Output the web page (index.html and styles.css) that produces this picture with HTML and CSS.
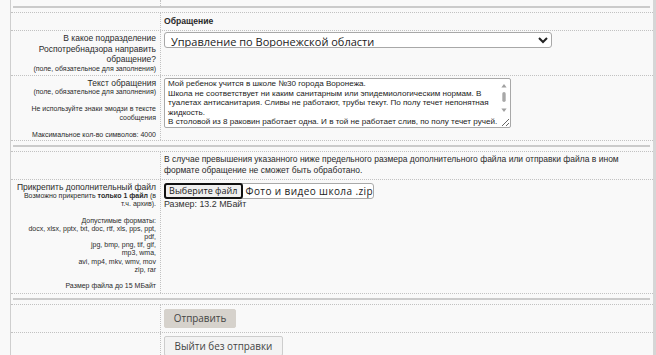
FILE: index.html
```html
<!DOCTYPE html>
<html lang="ru">
<head>
<meta charset="utf-8">
<title>Обращение</title>
<link rel="stylesheet" href="styles.css">
</head>
<body>
<div class="page">
  <div class="row row-top"><div class="lbl"></div><div class="val"></div></div>
  <div class="sep sep-first"><div class="sep-line"></div></div>

  <div class="row row-head">
    <div class="lbl"></div>
    <div class="val"><b class="head">Обращение</b></div>
  </div>

  <div class="row row-select">
    <div class="lbl">
      <div class="lbl-main">В какое подразделение<br>Роспотребнадзора направить<br>обращение?</div>
      <div class="lbl-small">(поле, обязательное для заполнения)</div>
    </div>
    <div class="val">
      <select class="sel"><option>Управление по Воронежской области</option></select>
    </div>
  </div>

  <div class="row row-text">
    <div class="lbl">
      <div class="lbl-main">Текст обращения</div>
      <div class="lbl-small">(поле, обязательное для заполнения)<br><br>Не используйте знаки эмодзи в тексте<br>сообщения<br><br>Максимальное кол-во символов: 4000</div>
    </div>
    <div class="val">
      <div class="txt-wrap">
        <textarea class="txt">Мой ребенок учится в школе №30 города Воронежа.
Школа не соответствует ни каким санитарным или эпидемиологическим нормам. В
туалетах антисанитария. Сливы не работают, трубы текут. По полу течет непонятная
жидкость.
В столовой из 8 раковин работает одна. И в той не работает слив, по полу течет ручей.

</textarea>
        <svg class="fake-scroll" width="10" height="38" viewBox="0 0 10 38" aria-hidden="true">
          <rect x="0" y="0" width="10" height="38" fill="#fff"/>
          <path d="M5 4 L7.6 7.5 L2.4 7.5 Z" fill="#a0a0a0"/>
          <rect x="3.3" y="12" width="3.4" height="10" rx="1.7" fill="#a8a8a8"/>
          <path d="M5 32 L7.6 28.5 L2.4 28.5 Z" fill="#a0a0a0"/>
        </svg>
      </div>
    </div>
  </div>

  <div class="sep"><div class="sep-line"></div></div>

  <div class="row row-note">
    <div class="lbl"></div>
    <div class="val note">В случае превышения указанного ниже предельного размера дополнительного файла или отправки файла в ином<br>формате обращение не сможет быть обработано.</div>
  </div>

  <div class="row row-file">
    <div class="lbl">
      <div class="lbl-main">Прикрепить дополнительный файл</div>
      <div class="lbl-small lbl-files">Возможно прикрепить <b>только 1 файл</b> (в<br>т.ч. архив).<br><br>Допустимые форматы:<br>docx, xlsx, pptx, txt, doc, rtf, xls, pps, ppt,<br>pdf,<br>jpg, bmp, png, tif, gif,<br>mp3, wma,<br>avi, mp4, mkv, wmv, mov<br>zip, rar<br><br>Размер файла до 15 МБайт</div>
    </div>
    <div class="val">
      <span class="file"><span class="file-btn">Выберите файл</span><span class="file-name">Фото и видео школа .zip</span></span>
      <div class="file-size">Размер: 13.2 МБайт</div>
    </div>
  </div>

  <div class="sep"><div class="sep-line"></div></div>

  <div class="row row-btn">
    <div class="lbl"></div>
    <div class="val"><button class="btn btn-send" type="button">Отправить</button></div>
  </div>

  <div class="row row-btn2">
    <div class="lbl"></div>
    <div class="val"><button class="btn btn-exit" type="button">Выйти без отправки</button></div>
  </div>
</div>
</body>
</html>
```
FILE: styles.css
```css
* { box-sizing: border-box; }
html, body { margin: 0; padding: 0; }
body {
  width: 656px;
  height: 355px;
  overflow: hidden;
  background: #f9f9f9;
  font-family: "Liberation Sans", Arial, sans-serif;
  color: #2a2a2a;
}
.page {
  margin-left: 10px;
  border-left: 1px solid #cfcfcf;
  border-right: 3px solid #d6d6d6;
  min-height: 380px;
}
.row {
  display: grid;
  grid-template-columns: 150px 1fr;
  border-bottom: 1px dotted #c2c2c2;
}
.lbl {
  border-right: 1px dotted #c2c2c2;
  text-align: right;
  padding: 2px 4px 0 2px;
  white-space: nowrap;
}
.val { padding: 0 3px; }

.row-top { height: 6px; border-bottom: none; }

.sep {
  padding: 4px 3px 0 2px;
  border-bottom: 1px dotted #c2c2c2;
}
.sep-first { padding-top: 0; }
.sep-line {
  height: 2px;
  background: #cbcbcb;
  margin-bottom: 4px;
}

.lbl-main { font-size: 8.5px; line-height: 10.5px; }
.lbl-small { font-size: 7px; line-height: 8.6px; }
.lbl-files { line-height: 8.2px; }

.row-head { height: 18px; }
.head { display: block; font-size: 8.6px; line-height: 17px; }

.row-select { height: 45px; }
.sel {
  margin-top: 1px;
  width: 388px;
  height: 16px;
  font-family: "Open Sans", sans-serif;
  font-size: 11px;
  color: #222;
  background: #fff;
  border: 1px solid #a8a8a8;
  border-radius: 3px;
  padding: 0 2px;
}

.row-text { height: 65px; }
.row-text .lbl-main { line-height: 10px; }
.txt-wrap {
  position: relative;
  width: 347px;
  margin-top: 2px;
}
.txt {
  display: block;
  width: 347px;
  height: 50px;
  font-family: "Liberation Sans", Arial, sans-serif;
  font-size: 8.1px;
  line-height: 9.6px;
  color: #222;
  background: #fff;
  border: 1px solid #a8a8a8;
  border-radius: 2px;
  padding: 0 14px 0 3px;
  resize: both;
  overflow: hidden;
  white-space: pre;
}
.fake-scroll {
  position: absolute;
  right: 2px;
  top: 2px;
  display: block;
}

.row-note { height: 28px; }
.note { font-size: 8.5px; line-height: 11px; padding-top: 2px; white-space: nowrap; }

.row-file { height: 114px; }
.row-file .lbl-main { line-height: 10px; }
.file {
  display: inline-flex;
  align-items: stretch;
  margin-top: 1px;
  height: 16px;
  width: 210px;
  border: 1px solid #a9a9a9;
  border-radius: 3px;
  background: #fff;
  font-family: "Open Sans", sans-serif;
  font-size: 9px;
  color: #222;
  white-space: nowrap;
}
.file-btn {
  display: flex;
  align-items: center;
  justify-content: center;
  width: 84px;
  margin: -1px 0 -1px -1px;
  border: 2px solid #111;
  border-radius: 3px;
  background: #efefef;
}
.file-name {
  display: flex;
  align-items: center;
  padding-left: 3px;
  font-size: 10px;
  letter-spacing: 0.4px;
}
.file-size { font-size: 8.9px; line-height: 10px; color: #333; }

.row-btn { height: 28px; }
.row-btn2 { border-bottom: none; height: 40px; }
.btn {
  font-family: "Open Sans", sans-serif;
  font-size: 9.9px;
  color: #444;
  border-radius: 2px;
  height: 19px;
  padding: 0;
  line-height: 17px;
  white-space: nowrap;
  text-align: center;
}
.btn-send {
  margin-top: 4px;
  width: 72px;
  background: #d6d2cc;
  border: 1px solid #d6d2cc;
}
.btn-exit {
  margin-top: 3px;
  width: 119px;
  height: 20px;
  background: #f3f3f3;
  border: 1px solid #cdcdcd;
}
```
